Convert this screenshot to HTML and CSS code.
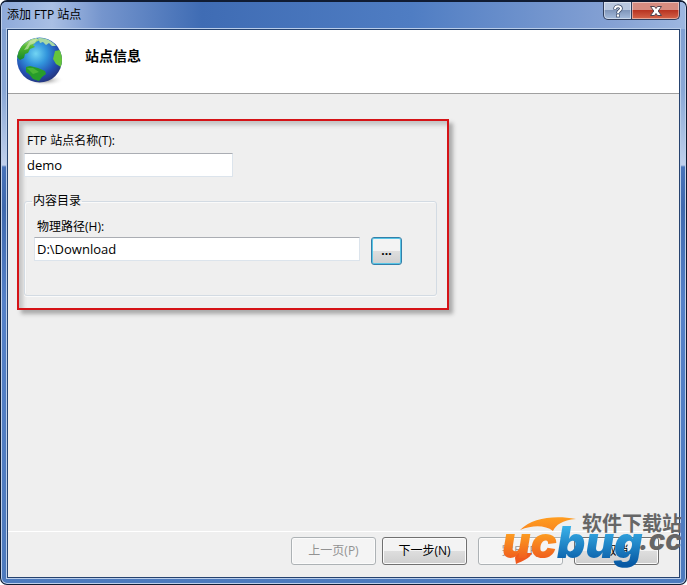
FILE: index.html
```html
<!DOCTYPE html>
<html lang="zh-CN">
<head>
<meta charset="utf-8">
<title>添加 FTP 站点</title>
<link rel="stylesheet" href="styles.css">
</head>
<body>
<div class="window">
  <header class="titlebar">
    <span class="title">添加 FTP 站点</span>
    <div class="controls">
      <button class="help" type="button" aria-label="帮助"><svg width="10" height="14" viewBox="0 0 10 14"><path d="M2 5.500C2 1.500 8 1.500 8 4.500C8 6.500 5 6.500 5 9" fill="none" stroke="#3d4c68" stroke-width="3.600"/><path d="M2 5C2 1.500 8 1.500 8 4.500C8 6.500 5 6.500 5 9" fill="none" stroke="#fff" stroke-width="2"/><rect x="3.500" y="10" width="3" height="3" fill="#fff" stroke="#3d4c68" stroke-width=".7"/></svg></button>
      <button class="close" type="button" aria-label="关闭"><svg width="12" height="10" viewBox="0 0 12 10"><path d="M.5.5H4.500L6 2.500 7.500.5H11.500L8.200 5 11.500 9.500H7.500L6 7.500 4.500 9.500H.5L3.800 5Z" fill="#fff" stroke="#51434e"/></svg></button>
    </div>
  </header>
  <main class="client">
    <section class="banner">
      <svg class="globe" width="50" height="50" viewBox="0 0 50 50" aria-hidden="true">
        <defs>
          <radialGradient id="sea" cx=".42" cy=".36" r=".65"><stop offset="0" stop-color="#72d5f3"/><stop offset=".38" stop-color="#3295dc"/><stop offset=".75" stop-color="#234fb2"/><stop offset="1" stop-color="#243680"/></radialGradient>
          <linearGradient id="land" x2="0" y2="1"><stop stop-color="#c2e4a0"/><stop offset=".4" stop-color="#51b72f"/><stop offset="1" stop-color="#16882a"/></linearGradient>
          <radialGradient id="floor"><stop stop-color="#777"/><stop offset="1" stop-color="#fff" stop-opacity="0"/></radialGradient>
          <clipPath id="ball"><circle cx="23.500" cy="24" r="22.500"/></clipPath>
        </defs>
        <ellipse cx="29" cy="44" rx="19" ry="6" fill="url(#floor)"/>
        <circle cx="23.500" cy="24" r="22.500" fill="url(#sea)"/>
        <g clip-path="url(#ball)">
          <path d="M2 15Q8 4 20 2L24 4 20 6 17 9 19 11 14 13 12 17 9 18 8 22 4 24 1 21Z" fill="url(#land)"/>
          <path d="M14 5L21 3 19 7 14 9 12 13 8 14Z" fill="#d7edc0" opacity=".6"/>
          <path d="M22 2Q33 1 40 10L36 10 33 7 30 9 27 6 24 7Z" fill="#a8d9a4"/>
          <path d="M39 15L44 14 48 22 45 31 40 28 37 23Z" fill="#65c53b"/>
          <path d="M10 31L14 30 22 32 29 35 30 38 26 41 23 45 17 43 13 38 10 36Z" fill="#279c2a"/>
          <path d="M11 32L17 32 23 36 17 38Z" fill="#64c640" opacity=".6"/>
        </g>
      </svg>
      <h1>站点信息</h1>
    </section>
    <form class="content">
      <div class="callout">
        <label for="site">FTP 站点名称(T):</label>
        <input id="site" class="site" type="text" value="demo">
        <fieldset>
          <legend>内容目录</legend>
          <label for="path">物理路径(H):</label>
          <div class="path-row">
            <input id="path" type="text" value="D:\Download">
            <button class="browse" type="button" aria-label="浏览">...</button>
          </div>
        </fieldset>
      </div>
    </form>
    <footer>
      <button type="button" disabled>上一页(P)</button>
      <button type="button">下一步(N)</button>
      <button class="finish" type="button" disabled>完成(F)</button>
      <button type="button">取消</button>
    </footer>
  </main>
  <div class="watermark" aria-hidden="true">
    <svg width="86" height="50" viewBox="0 0 86 50"><defs><linearGradient id="orange" x2="0" y2="1"><stop stop-color="#ff9d20"/><stop offset="1" stop-color="#f9861f"/></linearGradient></defs><path d="M18 14C30 2 52-1 74 3C60 4 54 9 51 15C43 9 31 9 18 14Z" fill="url(#orange)"/><path d="M14 37L30 37C28 42 21 45 14 48L13 42Z" fill="#ef591d"/></svg>
    <span class="brand"><span class="uc">uc</span><span class="bug">bug</span></span>
    <span class="domain">.cc</span>
    <span class="slogan">软件下载站</span>
  </div>
</div>
</body>
</html>
```

FILE: styles.css
```css
* { box-sizing: border-box; }
body {
  margin: 0;
  background: #fff;
  color: #000;
  font: 12px/16px "Open Sans", "Noto Sans CJK SC", sans-serif;
}
button, input { font: inherit; color: inherit; }
.window {
  position: relative;
  display: flex;
  flex-direction: column;
  min-height: 100vh;
  padding: 0 6px 6px;
  overflow: hidden;
  border: 1px solid #101c33;
  border-top-width: 2px;
  border-radius: 7px;
  background: linear-gradient(#7c9cd0, #8aa8d6 90px, #c0d0ec 163px, #4873b9 165px, #3f69ae 205px, #5581c8 300px, #4d7abd);
  box-shadow: inset 0 0 0 1px #bfd0ea;
}
.titlebar {
  display: flex;
  justify-content: space-between;
  height: 27px;
  margin: 0 -5px;
  padding: 0 5px;
  background: linear-gradient(90deg, #8eaada, #a9bfe4 50px, #7595cd 100px, #3f6cb4 200px, #4f7dc3 60%, #86a2d4 90%, #9db7e0);
}
.title { padding-top: 5px; }
.controls { display: flex; height: 18px; }
.controls button {
  display: grid;
  place-items: center;
  padding: 0;
  border: 1px solid #303e5c;
  border-top: 0;
  box-shadow: inset 0 0 0 1px #ffffff70;
}
.help { width: 29px; border-radius: 0 0 0 5px; background: linear-gradient(#b9c8df 48%, #8197bb 50%, #a6bddd); }
.controls .close { width: 48px; border-left: 0; border-radius: 0 0 5px 0; background: linear-gradient(#d68c80 45%, #b83321 48%, #d5654a); }
.client {
  display: flex;
  flex: 1;
  flex-direction: column;
  border: 1px solid #26436f;
  background: #efefef;
  box-shadow: 0 0 0 1px #b9cdea;
}
.banner {
  display: flex;
  height: 64px;
  padding: 6px 8px;
  border-bottom: 1px solid #a0a0a0;
  background: #fff;
}
h1 { margin: 12px 0 0 19px; font-size: 14px; line-height: 16px; }
.content { flex: 1; padding: 25px 9px; }
.callout {
  width: 432px;
  max-width: 100%;
  height: 191px;
  padding: 12px 10px 0 5px;
  border: 2px solid #d51317;
  box-shadow: 4px 4px 4px #aaa, inset 4px 4px 4px #c4c4c4;
}
label { display: block; margin-left: 3px; }
input {
  display: block;
  height: 24px;
  padding: 0 2px;
  border: 1px solid #dce4ec;
  border-top-color: #aaadb3;
  border-radius: 0;
  background: #fff;
  font-size: 13px;
}
.site { width: 209px; margin-top: 4px; }
fieldset {
  height: 103px;
  margin: 16px 0 0;
  padding: 10px 9px 0;
  border: 1px solid #d3dbe3;
  border-radius: 3px;
  box-shadow: inset 1px 1px #fafafa, 0 1px #fafafa;
}
legend { margin-left: -2px; padding: 0 1px; }
.path-row { display: flex; gap: 11px; margin-top: 2px; }
.path-row input { width: 326px; }
footer {
  display: flex;
  justify-content: flex-end;
  gap: 11px;
  height: 46px;
  padding: 5px 20px 0 0;
  border-top: 1px solid #fff;
}
footer button, .browse {
  padding: 0;
  border: 1px solid #707070;
  border-radius: 3px;
  background: linear-gradient(#f3f3f3 48%, #dedede 50%, #cfcfcf);
  box-shadow: inset 0 0 0 1px #fbfbfb;
}
footer button { width: 85px; height: 28px; }
footer button:first-child { margin-right: -5px; }
footer button:disabled { border-color: #adb2b5; background: #f4f4f4; color: #929292; }
.browse {
  width: 31px;
  height: 28px;
  border-color: #337fa9;
  box-shadow: inset 0 0 0 1px #58c5e6;
  font-weight: 700;
}
.watermark { position: absolute; right: 0; bottom: 13px; width: 184px; height: 56px; font-weight: 700; white-space: nowrap; }
.watermark svg, .watermark > span { position: absolute; }
.watermark svg { left: 0; top: 1px; }
.brand { left: 0; top: 1px; font: italic 900 44px/52px Inter, sans-serif; }
.brand span { padding-bottom: 4px; background-clip: text; -webkit-text-fill-color: transparent; }
.uc { background-image: linear-gradient(#ffae22 20%, #ee501c 85%); }
.bug { background-image: linear-gradient(#39b0e8 20%, #0759a4 85%); }
.domain { right: 4px; top: 7px; color: #666; font: italic 800 28px/36px Inter, sans-serif; }
.slogan { right: 4px; top: -1px; color: #666; font-size: 20px; line-height: 20px; }
```
